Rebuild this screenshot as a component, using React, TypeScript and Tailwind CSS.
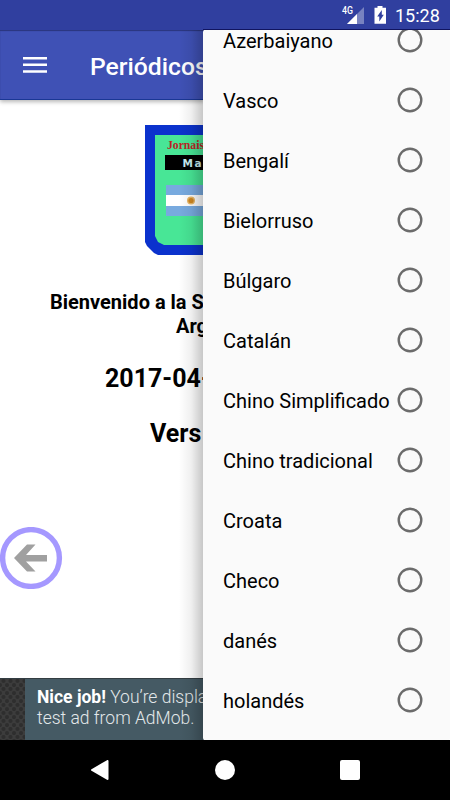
import { useState } from 'react'

const languages = [
  'Azerbaiyano',
  'Vasco',
  'Bengalí',
  'Bielorruso',
  'Búlgaro',
  'Catalán',
  'Chino Simplificado',
  'Chino tradicional',
  'Croata',
  'Checo',
  'danés',
  'holandés',
]

function StatusBar() {
  return (
    <div className="flex h-[30px] shrink-0 items-center justify-end bg-[#303f9f] pr-[11px] text-white">
      <svg className="h-[30px] w-[48px]" viewBox="340 0 48 30">
        <text x="342" y="13.8" fontSize="10.5" fontWeight="500" fill="#fff" textLength="11" lengthAdjust="spacingAndGlyphs">
          4G
        </text>
        <path d="M364 7v17h-17z" fill="#fff" fillOpacity="0.35" />
        <path d="M357 14v10h-10z" fill="#fff" />
        <path d="M377.500 6h5v1.800h3.500v16h-11.500v-16h3z" fill="#fff" />
        <path d="M381.800 10v4.700h2l-4.500 6.800v-4.900h-2.100z" fill="#303f9f" />
      </svg>
      <span className="ml-[7px] w-[44px] pt-px text-[18px] leading-[29px] font-normal whitespace-nowrap">15:28</span>
    </div>
  )
}

function Toolbar() {
  return (
    <div className="relative flex h-[70px] shrink-0 items-center border-b border-[#1a3795] bg-[#3f51b5] pl-[23px] text-white shadow-[0_2px_4px_rgba(0,0,0,0.28),inset_0_1px_1px_rgba(20,25,70,0.5)]">
      <svg className="h-[18px] w-[24px] shrink-0" viewBox="0 0 24 18" fill="#fff">
        <path d="M0 1h24v2.500H0zM0 7.500h24v2.500H0zM0 14.200h24v2.500H0z" />
      </svg>
      <span className="ml-[43px] pt-[4px] text-[24.700px] leading-[30px] font-medium">Periódicos</span>
    </div>
  )
}

function Logo() {
  return (
    <svg className="mt-[25px] ml-[145px] h-[130px] w-[60px] shrink-0" viewBox="0 0 60 130">
      <path d="M0 0h60v130H13L9 128L2 121L0 117z" fill="#0b32cd" />
      <path d="M10 10h50v110H19L13 117L10 111z" fill="#48e696" />
      <text x="22" y="24" fontSize="12" fontWeight="700" fill="#bd2525" className="font-['Liberation_Serif',serif]" textLength="37" lengthAdjust="spacingAndGlyphs">
        Jornais
      </text>
      <path d="M20 30h40v15H20z" fill="#000" />
      <text x="37.500" y="42" fontSize="10.5" fontWeight="700" fill="#c9edf0" className="font-['DejaVu_Sans',sans-serif]" letterSpacing="1.5">
        Ma
      </text>
      <path d="M21 60h39v31H21z" fill="#78aadf" />
      <path d="M21 70h39v11H21z" fill="#fff" />
      <circle cx="46" cy="75.500" r="4" fill="#e8b765" />
      <circle cx="46" cy="75.500" r="2.600" fill="#ce8620" />
    </svg>
  )
}

function BackButton() {
  return (
    <svg className="mt-[78px] h-[62px] w-[63px] shrink-0" viewBox="0 0 63 62">
      <circle cx="31" cy="31" r="28.400" fill="#fff" stroke="#a598ff" strokeWidth="5.400" />
      <path d="M14 31L27 17.500H35.500L26 28H47V34.500H26L35.500 44.500H27z" fill="#a0a0a0" />
    </svg>
  )
}

function AdBanner() {
  return (
    <div className="mt-auto flex h-[62px] shrink-0 border-t border-[#333d42] bg-[#455a64]">
      <svg className="h-[61px] w-[25px] shrink-0">
        <defs>
          <pattern id="mesh" width="7" height="8" patternUnits="userSpaceOnUse">
            <rect width="7" height="8" fill="#3c3c3c" />
            <circle cx="3.500" cy="2" r="2.100" fill="#2e2e2e" />
            <circle cx="0" cy="6" r="2.100" fill="#2e2e2e" />
            <circle cx="7" cy="6" r="2.100" fill="#2e2e2e" />
          </pattern>
        </defs>
        <rect width="25" height="61" fill="url(#mesh)" />
      </svg>
      <p className="pt-[8px] pl-[12px] text-[17.500px] leading-[21px] font-light whitespace-nowrap text-[#e3e8ea]">
        <b className="font-bold text-white">Nice job!</b> You’re displa
        <br />
        test ad from AdMob.
      </p>
    </div>
  )
}

function LanguageMenu() {
  const [selected, setSelected] = useState('')

  return (
    <div className="absolute top-[30px] left-[203px] h-[710px] w-[247px] overflow-hidden rounded-[2px] bg-[#fafafa]">
      <div className="-mt-[20px] flex flex-col">
        {languages.map((language) => (
          <button
            key={language}
            onClick={() => setSelected(language)}
            className="flex h-[60px] items-center justify-between pr-[27px] pl-[20px] text-[20px] whitespace-nowrap text-black"
          >
            <span className="pt-px">{language}</span>
            <svg className="size-[26px] shrink-0" viewBox="0 0 26 26">
              <circle cx="13" cy="13" r="11.300" fill="none" stroke="#6b6b6b" strokeWidth="2.400" />
              {selected === language && <circle cx="13" cy="13" r="6" fill="#ff4081" />}
            </svg>
          </button>
        ))}
      </div>
    </div>
  )
}

function NavigationBar() {
  return (
    <div className="flex h-[60px] shrink-0 items-center bg-black pl-[90px]">
      <svg className="size-5" viewBox="0 0 20 20">
        <path d="M2 10L17.500 1v18z" fill="#fff" stroke="#fff" strokeWidth="2" strokeLinejoin="round" />
      </svg>
      <div className="ml-[105px] size-5 rounded-full bg-white" />
      <div className="ml-[105px] size-5 rounded-[2px] bg-white" />
    </div>
  )
}

export default function App() {
  return (
    <div className="relative flex h-[800px] w-[450px] flex-col overflow-hidden bg-white font-['Roboto',sans-serif]">
      <StatusBar />
      <div className="flex h-[710px] w-[204px] flex-col overflow-hidden">
        <Toolbar />
        <Logo />
        <div className="mt-[35px] pl-[50px] text-[20px] leading-[24px] font-bold whitespace-nowrap text-black">
          <p>Bienvenido a la S</p>
          <p className="pl-[126px]">Arg</p>
        </div>
        <h2 className="mt-[26px] pl-[105px] text-[25px] leading-[30px] font-bold whitespace-nowrap">2017-04-</h2>
        <h2 className="mt-[25px] pl-[150px] text-[25px] leading-[30px] font-bold whitespace-nowrap">Vers</h2>
        <BackButton />
        <AdBanner />
      </div>
      <NavigationBar />
      {/* shade cast by the open menu on the content to its left */}
      <div className="absolute top-[30px] left-[179px] h-[710px] w-[24px] bg-linear-to-r from-black/0 via-black/6 to-black/22" />
      <div className="absolute top-[29px] left-[203px] h-px w-[247px] bg-[#10145f]" />
      <LanguageMenu />
    </div>
  )
}
